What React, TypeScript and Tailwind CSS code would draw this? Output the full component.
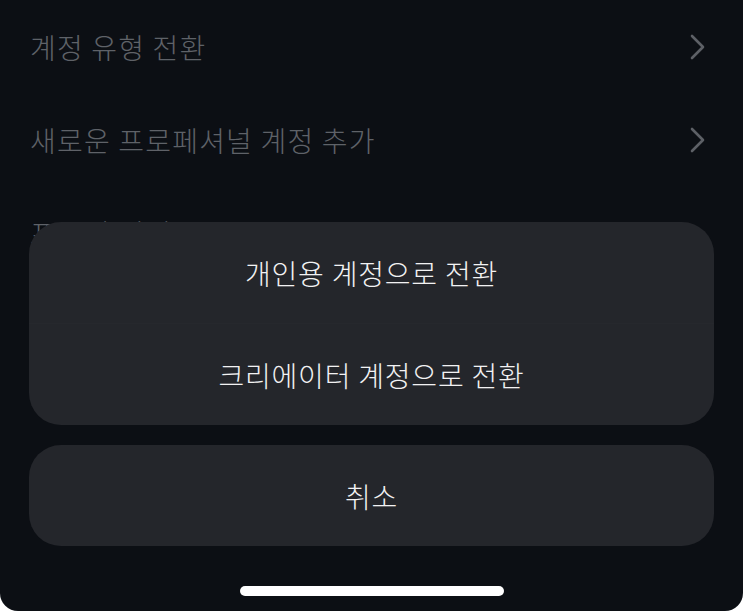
const font = { fontFamily: '"Noto Sans CJK KR", "Noto Sans", sans-serif' };

function Chevron() {
  return (
    <svg width="18" height="28" viewBox="0 0 18 28" fill="none" className="text-[#5d6066]">
      <path d="M3 3 L14 14 L3 25" stroke="currentColor" strokeWidth="2.6" strokeLinecap="round" strokeLinejoin="round" />
    </svg>
  );
}

function ListRow({ label, chevron = true }: { label: string; chevron?: boolean }) {
  return (
    <div className="h-[93px] flex items-center justify-between pl-[30px] pr-[36px]">
      <span className="text-[28px] font-light text-[#5f6268] tracking-[1.2px]">{label}</span>
      {chevron && <Chevron />}
    </div>
  );
}

function SheetButton({ label }: { label: string }) {
  return (
    <div className="h-[101px] flex items-center justify-center text-[28px] font-light text-[#f2f2f3] tracking-[0.8px]">
      {label}
    </div>
  );
}

export default function App() {
  return (
    <div className="bg-white w-[743px] h-[611px]" style={font}>
      <div className="relative w-full h-full bg-[#0c0f14] rounded-b-[18px] overflow-hidden">
        <div>
          <ListRow label="계정 유형 전환" />
          <ListRow label="새로운 프로페셔널 계정 추가" />
          <ListRow label="프로필 편집" chevron={false} />
        </div>
        <div className="absolute left-0 right-0 top-[222px] px-[29px] flex flex-col gap-[20px]">
          <div className="bg-[#24262b] rounded-[32px] flex flex-col">
            <SheetButton label="개인용 계정으로 전환" />
            <div className="h-px bg-[#26282d]" />
            <SheetButton label="크리에이터 계정으로 전환" />
          </div>
          <div className="bg-[#24262b] rounded-[32px]">
            <SheetButton label="취소" />
          </div>
        </div>
        <div className="absolute left-[240px] top-[586px] w-[264px] h-[10px] rounded-full bg-white" />
      </div>
    </div>
  );
}
